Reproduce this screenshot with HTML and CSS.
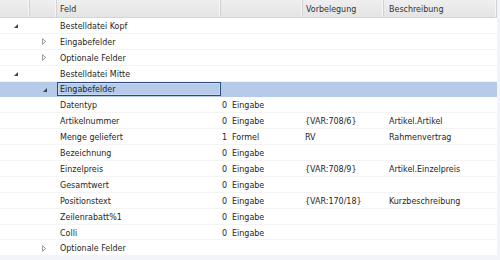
FILE: index.html
```html
<!DOCTYPE html>
<html>
<head>
<meta charset="utf-8">
<link rel="stylesheet" href="styles.css">
</head>
<body>
<div class="grid">
  <div class="row head">
    <div class="c c0"></div>
    <div class="c c1"></div>
    <div class="c c2">Feld</div>
    <div class="c c3"></div>
    <div class="c c4">Vorbelegung</div>
    <div class="c c5">Beschreibung</div>
  </div>

  <div class="row">
    <div class="c c0"><svg class="ex" viewBox="0 0 5 5"><polygon points="5,0 5,5 0,5"/></svg></div>
    <div class="c c1"></div>
    <div class="c c2">Bestelldatei Kopf</div>
    <div class="c c3"></div><div class="c c4"></div><div class="c c5"></div>
  </div>
  <div class="row">
    <div class="c c0"></div>
    <div class="c c1"><svg class="co" viewBox="0 0 5 8"><polygon points="0.5,0.5 4.5,4 0.5,7.5"/></svg></div>
    <div class="c c2">Eingabefelder</div>
    <div class="c c3"></div><div class="c c4"></div><div class="c c5"></div>
  </div>
  <div class="row">
    <div class="c c0"></div>
    <div class="c c1"><svg class="co" viewBox="0 0 5 8"><polygon points="0.5,0.5 4.5,4 0.5,7.5"/></svg></div>
    <div class="c c2">Optionale Felder</div>
    <div class="c c3"></div><div class="c c4"></div><div class="c c5"></div>
  </div>
  <div class="row">
    <div class="c c0"><svg class="ex" viewBox="0 0 5 5"><polygon points="5,0 5,5 0,5"/></svg></div>
    <div class="c c1"></div>
    <div class="c c2">Bestelldatei Mitte</div>
    <div class="c c3"></div><div class="c c4"></div><div class="c c5"></div>
  </div>
  <div class="row sel">
    <div class="c c0"></div>
    <div class="c c1"><svg class="ex" viewBox="0 0 5 5"><polygon points="5,0 5,5 0,5"/></svg></div>
    <div class="c c2 focus">Eingabefelder</div>
    <div class="c c3"></div><div class="c c4"></div><div class="c c5"></div>
  </div>

  <div class="row">
    <div class="c c0"></div><div class="c c1"></div>
    <div class="c c2">Datentyp</div>
    <div class="c c3"><span class="n">0</span>Eingabe</div>
    <div class="c c4"></div><div class="c c5"></div>
  </div>
  <div class="row">
    <div class="c c0"></div><div class="c c1"></div>
    <div class="c c2">Artikelnummer</div>
    <div class="c c3"><span class="n">0</span>Eingabe</div>
    <div class="c c4">{VAR:708/6}</div><div class="c c5">Artikel.Artikel</div>
  </div>
  <div class="row">
    <div class="c c0"></div><div class="c c1"></div>
    <div class="c c2">Menge geliefert</div>
    <div class="c c3"><span class="n">1</span>Formel</div>
    <div class="c c4">RV</div><div class="c c5">Rahmenvertrag</div>
  </div>
  <div class="row">
    <div class="c c0"></div><div class="c c1"></div>
    <div class="c c2">Bezeichnung</div>
    <div class="c c3"><span class="n">0</span>Eingabe</div>
    <div class="c c4"></div><div class="c c5"></div>
  </div>
  <div class="row">
    <div class="c c0"></div><div class="c c1"></div>
    <div class="c c2">Einzelpreis</div>
    <div class="c c3"><span class="n">0</span>Eingabe</div>
    <div class="c c4">{VAR:708/9}</div><div class="c c5">Artikel.Einzelpreis</div>
  </div>
  <div class="row">
    <div class="c c0"></div><div class="c c1"></div>
    <div class="c c2">Gesamtwert</div>
    <div class="c c3"><span class="n">0</span>Eingabe</div>
    <div class="c c4"></div><div class="c c5"></div>
  </div>
  <div class="row">
    <div class="c c0"></div><div class="c c1"></div>
    <div class="c c2">Positionstext</div>
    <div class="c c3"><span class="n">0</span>Eingabe</div>
    <div class="c c4">{VAR:170/18}</div><div class="c c5">Kurzbeschreibung</div>
  </div>
  <div class="row">
    <div class="c c0"></div><div class="c c1"></div>
    <div class="c c2">Zeilenrabatt%1</div>
    <div class="c c3"><span class="n">0</span>Eingabe</div>
    <div class="c c4"></div><div class="c c5"></div>
  </div>
  <div class="row">
    <div class="c c0"></div><div class="c c1"></div>
    <div class="c c2">Colli</div>
    <div class="c c3"><span class="n">0</span>Eingabe</div>
    <div class="c c4"></div><div class="c c5"></div>
  </div>
  <div class="row">
    <div class="c c0"></div>
    <div class="c c1"><svg class="co" viewBox="0 0 5 8"><polygon points="0.5,0.5 4.5,4 0.5,7.5"/></svg></div>
    <div class="c c2">Optionale Felder</div>
    <div class="c c3"></div><div class="c c4"></div><div class="c c5"></div>
  </div>
</div>
</body>
</html>
```

FILE: styles.css
```css
html, body {
  margin: 0;
  padding: 0;
  background: #f3f4f9;
}
body {
  width: 500px;
  height: 260px;
  overflow: hidden;
  font-family: "DejaVu Sans", "Liberation Sans", sans-serif;
  font-stretch: condensed;
  font-size: 8.9px;
  color: #262626;
}
.grid {
  width: 497px;
  height: 256px;
  background: #ffffff;
  display: flex;
  flex-direction: column;
}
.row {
  display: grid;
  grid-template-columns: 30px 27px 164px 82px 81px 113px;
  height: 15.9px;
  flex: none;
  box-sizing: border-box;
  border-bottom: 1px solid #f4f4f4;
}
.head {
  height: 18px;
  background: linear-gradient(#efefef, #e4e4e4);
  border-bottom: 1px solid #d6d6d6;
  color: #333;
}
.head .c {
  border-right: 1px solid #d2d2d2;
  box-shadow: inset -1px 0 0 #f6f6f6;
}
.head .c2 { padding-left: 3px; }
.head .c4 { padding-left: 3px; }
.head .c5 { padding-left: 5px; }
.c {
  display: flex;
  align-items: center;
  box-sizing: border-box;
  white-space: nowrap;
  overflow: hidden;
  padding-top: 1px;
}
.c0, .c1 { justify-content: center; }
.c2 { padding-left: 3px; }
.c3 { padding-left: 1px; }
.c4 { padding-left: 2px; }
.c5 { padding-left: 5px; }
.n { width: 10px; }
.ex {
  width: 4px;
  height: 4px;
  fill: #404040;
  margin-left: 2px;
}
.co {
  width: 4px;
  height: 7px;
  fill: #ffffff;
  stroke: #7a7a7a;
  stroke-width: 1;
  margin-left: 1px;
}
.sel {
  background: #b5cbe9;
  border-bottom-color: #b5cbe9;
}
.focus {
  border: 1px solid #2d4c7c;
  box-shadow: inset 0 0 0 1px #c9daf0;
  padding-left: 2px;
  padding-top: 0;
}
```
